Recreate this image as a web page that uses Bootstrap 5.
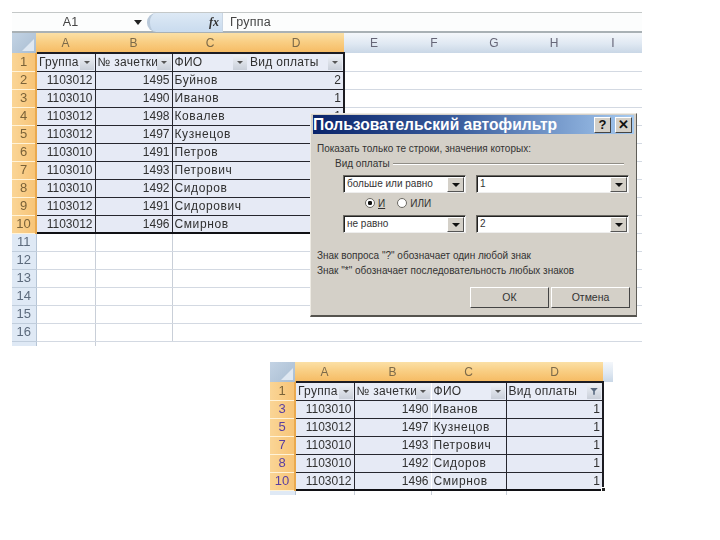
<!DOCTYPE html>
<html lang="ru">
<head>
<meta charset="utf-8">
<title>Автофильтр</title>
<link href="https://cdn.jsdelivr.net/npm/bootstrap@5.3.0/dist/css/bootstrap.min.css" rel="stylesheet">
<style>
body{background:#fff;font-family:"Liberation Sans",Arial,sans-serif;font-size:12px;color:#303030;overflow:hidden;width:720px;height:540px}
.stage{width:720px;height:540px;padding-top:12px;filter:blur(.3px)}
.sheet-one{margin-left:12px;width:630px}
.sheet-two{margin-left:270px;width:343px;margin-top:16px}
.fbar{height:21px;border-top:1px solid #c4c8c8;border-bottom:2px solid #a9b1b5;background:#fcfdfd;line-height:19px;font-size:12.5px}
.fname{width:117px;text-align:center;color:#444}
.farrow{width:0;height:0;border:4px solid transparent;border-top:5px solid #222;border-bottom:0;margin:0 5px}
.fpill{width:75px;height:19px;border-radius:9px 0 0 9px;background:linear-gradient(#dde9f5,#c9dbee);border-left:3px solid #b9c9da;color:#333;text-align:right;padding-right:3px;font:italic bold 12px "Liberation Serif",serif;line-height:19px}
.ftext{padding-left:7px;border-left:1px solid #c9d6e4;letter-spacing:.2px;color:#444}
.xl{table-layout:fixed;border-collapse:collapse;width:100%}
.xl td,.xl th{height:18px;padding:0 2px;line-height:16px;white-space:nowrap;overflow:hidden;font-weight:400;border:0}
.xl .hdr th{height:20px;text-align:center;background:linear-gradient(#fbe0a6,#f9cf85 45%,#f6bc65);color:#7c6a4a}
.xl .hdr th.idle{background:linear-gradient(#f4f7fb,#dfe8f2 55%,#c9d7e6);color:#667}
.xl .hdr th.corner{background:linear-gradient(135deg,#c3d3e4,#a9bdd2);position:relative}
.xl .hdr th.corner::after{content:"";position:absolute;right:2px;bottom:2px;border:6px solid transparent;border-right-color:#dfe8f2;border-bottom-color:#dfe8f2}
.xl th.rn{text-align:center;font-size:13px;background:linear-gradient(90deg,#fad596,#f7c477);color:#7a6238;border-right:2px solid #e9a94f;border-bottom:1px solid #fff3d8}
.xl th.rn.plain{background:#dfe9f5;color:#5c6a7c;border-right:1px solid #b6c5d6;border-bottom:1px solid #c0cddc}
.xl th.rn.vio{color:#5a3fa0}
.xl td.band{background:#e6eaf5;border-bottom:1px solid #26262e}
.xl td.namec{letter-spacing:.6px}
.xl td.headc{background:#e8ecf6;border-top:2px solid #1c1c22;border-bottom:1px solid #26262e}
.xl td.vl{border-left:1px solid #26262e}
.xl td.vw{border-left:1px solid #fff}
.xl td.endc{border-right:2px solid #1c1c22}
.xl td.startc{border-left:2px solid #1c1c22}
.xl tr.lastband td.band{border-bottom:2px solid #101014}
.xl td.gridc{border-bottom:1px solid #d3d9e2}
.xl td.gv{border-left:1px solid #c9cfd8}
.fcell{display:flex;align-items:center;justify-content:space-between;letter-spacing:.3px;height:16px}
.fcell span:first-child{overflow:hidden}
.fbtn{flex:none;width:14px;height:15px;background:linear-gradient(#eef1f6,#c9cfd9);display:flex;align-items:center;justify-content:center;margin-right:-1px}
.fbtn::before{content:"";border:3px solid transparent;border-top:3px solid #555;border-bottom:0}
.fbtn.funnel::before{border:0;width:8px;height:7px;background:#596a80;clip-path:polygon(0 0,100% 0,60% 50%,60% 100%,40% 100%,40% 50%)}
.xl .tailrow th,.xl .tailrow td{height:5px;line-height:0;font-size:0}
.xl .tailrow th.rn{border-bottom:0}
.hook{position:relative}
.grip{position:absolute;left:331px;top:125px;width:5px;height:5px;background:#222;border:1px solid #fff}
.dlg{position:absolute;left:310px;top:113px;width:327px;height:204px;background:#d4d0c8;border:1px solid #eeebe4;border-right-color:#5f5d58;border-bottom:2px solid #55534e;padding:1px 2px;font-size:10px;color:#333;line-height:12px}
.dtitle{height:19px;background:linear-gradient(90deg,#0a246a,#3a5d9d 45%,#a6caf0);color:#fff;font-weight:700;font-size:15.6px;line-height:19px}
.dclose{width:17px;height:16px;background:#d4d0c8;border:1px solid;border-color:#fff #444 #444 #fff;color:#111;font-weight:700;font-size:13px;line-height:14px;text-align:center;margin-right:2px}
.dclose.ask{margin-right:0}
.dbody{padding:9px 4px 0 4px}
.dlegend{margin:2px 6px 0 18px;height:14px}
.dlegend i{flex:1;height:2px;margin-left:3px;border-top:1px solid #908d86;border-bottom:1px solid #fff}
.drow{margin-left:26px;margin-right:1px;gap:10px;height:18px}
.dsel{background:#fff;border:1px solid;border-color:#6b6963 #eee #eee #6b6963;box-shadow:inset 1px 1px 0 #222;height:18px;line-height:16px;padding-left:3px;position:relative;overflow:hidden}
.dsel.one{width:123px}
.dsel.two{flex:1}
.dsel b{position:absolute;right:1px;top:1px;width:17px;height:15px;background:#d4d0c8;border:1px solid;border-color:#fff #555 #555 #fff;display:flex;align-items:center;justify-content:center}
.dsel b::before{content:"";border:4px solid transparent;border-top:4px solid #111;border-bottom:0}
.dradio{height:22px;padding-left:48px;gap:12px}
.dot{width:10px;height:10px;border-radius:50%;background:#fff;border:1px solid #6b6963;display:inline-block;margin-right:3px;vertical-align:-1px}
.dot.on{background:radial-gradient(circle,#111 35%,#fff 42%)}
.dnote{margin-top:15px;line-height:15px;height:30px}
.dbtns{margin-top:9px;gap:2px}
.dbtn{width:79px;height:21px;background:#d4d0c8;border:1px solid;border-color:#fff #444 #444 #fff;text-align:center;line-height:19px;font-size:10.5px}
</style>
</head>
<body>
<div class="stage position-relative">
  <section class="sheet-one">
    <div class="fbar d-flex align-items-center">
      <div class="fname">A1</div>
      <div class="farrow"></div>
      <div class="fpill">fx</div>
      <div class="ftext flex-grow-1">Группа</div>
    </div>
    <table class="xl">
      <colgroup><col style="width:24px"><col style="width:59px"><col style="width:77px"><col style="width:76px"><col style="width:96px"><col style="width:60px"><col style="width:60px"><col style="width:60px"><col style="width:60px"><col style="width:58px"></colgroup>
      <tr class="hdr"><th class="corner"></th><th>A</th><th>B</th><th>C</th><th>D</th><th class="idle">E</th><th class="idle">F</th><th class="idle">G</th><th class="idle">H</th><th class="idle">I</th></tr>
      <tr><th class="rn">1</th><td class="headc startc"><div class="fcell"><span>Группа</span><i class="fbtn"></i></div></td><td class="headc vl"><div class="fcell"><span>№ зачетки</span><i class="fbtn"></i></div></td><td class="headc vl"><div class="fcell"><span>ФИО</span><i class="fbtn"></i></div></td><td class="headc endc"><div class="fcell"><span>Вид оплаты</span><i class="fbtn"></i></div></td><td class="gridc" colspan="5"></td></tr>
      <tr><th class="rn">2</th><td class="band startc text-end">1103012</td><td class="band vl text-end">1495</td><td class="band vl namec">Буйнов</td><td class="band endc text-end">2</td><td class="gridc" colspan="5"></td></tr>
      <tr><th class="rn">3</th><td class="band startc text-end">1103010</td><td class="band vl text-end">1490</td><td class="band vl namec">Иванов</td><td class="band endc text-end">1</td><td class="gridc" colspan="5"></td></tr>
      <tr><th class="rn">4</th><td class="band startc text-end">1103012</td><td class="band vl text-end">1498</td><td class="band vl namec">Ковалев</td><td class="band endc text-end">1</td><td class="gridc" colspan="5"></td></tr>
      <tr><th class="rn">5</th><td class="band startc text-end">1103012</td><td class="band vl text-end">1497</td><td class="band vl namec">Кузнецов</td><td class="band endc text-end">1</td><td class="gridc" colspan="5"></td></tr>
      <tr><th class="rn">6</th><td class="band startc text-end">1103010</td><td class="band vl text-end">1491</td><td class="band vl namec">Петров</td><td class="band endc text-end">2</td><td class="gridc" colspan="5"></td></tr>
      <tr><th class="rn">7</th><td class="band startc text-end">1103010</td><td class="band vl text-end">1493</td><td class="band vl namec">Петрович</td><td class="band endc text-end">1</td><td class="gridc" colspan="5"></td></tr>
      <tr><th class="rn">8</th><td class="band startc text-end">1103010</td><td class="band vl text-end">1492</td><td class="band vl namec">Сидоров</td><td class="band endc text-end">1</td><td class="gridc" colspan="5"></td></tr>
      <tr><th class="rn">9</th><td class="band startc text-end">1103012</td><td class="band vl text-end">1491</td><td class="band vl namec">Сидорович</td><td class="band endc text-end">2</td><td class="gridc" colspan="5"></td></tr>
      <tr class="lastband"><th class="rn">10</th><td class="band startc text-end">1103012</td><td class="band vl text-end">1496</td><td class="band vl namec">Смирнов</td><td class="band endc text-end">1</td><td class="gridc" colspan="5"></td></tr>
      <tr><th class="rn plain">11</th><td class="gridc"></td><td class="gridc gv"></td><td class="gridc gv" colspan="7"></td></tr>
      <tr><th class="rn plain">12</th><td class="gridc"></td><td class="gridc gv"></td><td class="gridc gv" colspan="7"></td></tr>
      <tr><th class="rn plain">13</th><td class="gridc"></td><td class="gridc gv"></td><td class="gridc gv" colspan="7"></td></tr>
      <tr><th class="rn plain">14</th><td class="gridc"></td><td class="gridc gv"></td><td class="gridc gv" colspan="7"></td></tr>
      <tr><th class="rn plain">15</th><td class="gridc"></td><td class="gridc gv"></td><td class="gridc gv" colspan="7"></td></tr>
      <tr><th class="rn plain">16</th><td class="gridc"></td><td class="gridc gv"></td><td class="gridc gv" colspan="7"></td></tr>
      <tr class="tailrow"><th class="rn plain"></th><td></td><td class="gv"></td><td colspan="7"></td></tr>
    </table>
  </section>

  <div class="dlg">
    <div class="dtitle d-flex align-items-center justify-content-between">
      <span>Пользовательский автофильтр</span>
      <span class="d-flex gap-1"><span class="dclose ask">?</span><span class="dclose">✕</span></span>
    </div>
    <div class="dbody">
      <div>Показать только те строки, значения которых:</div>
      <div class="dlegend d-flex align-items-center"><span>Вид оплаты</span><i></i></div>
      <div class="drow d-flex mt-1"><div class="dsel one">больше или равно<b></b></div><div class="dsel two">1<b></b></div></div>
      <div class="dradio d-flex align-items-center"><span><i class="dot on"></i><u>И</u></span><span><i class="dot"></i>ИЛИ</span></div>
      <div class="drow d-flex"><div class="dsel one">не равно<b></b></div><div class="dsel two">2<b></b></div></div>
      <div class="dnote">Знак вопроса "?" обозначает один любой знак<br>Знак "*" обозначает последовательность любых знаков</div>
      <div class="dbtns d-flex justify-content-end"><div class="dbtn">ОК</div><div class="dbtn">Отмена</div></div>
    </div>
  </div>

  <section class="sheet-two hook">
    <table class="xl">
      <colgroup><col style="width:25px"><col style="width:59px"><col style="width:77px"><col style="width:75px"><col style="width:97px"><col style="width:10px"></colgroup>
      <tr class="hdr"><th class="corner"></th><th>A</th><th>B</th><th>C</th><th>D</th><th class="idle"></th></tr>
      <tr><th class="rn">1</th><td class="headc startc"><div class="fcell"><span>Группа</span><i class="fbtn"></i></div></td><td class="headc vl"><div class="fcell"><span>№ зачетки</span><i class="fbtn"></i></div></td><td class="headc vw"><div class="fcell"><span>ФИО</span><i class="fbtn"></i></div></td><td class="headc vl endc"><div class="fcell"><span>Вид оплаты</span><i class="fbtn funnel"></i></div></td><td></td></tr>
      <tr><th class="rn vio">3</th><td class="band startc text-end">1103010</td><td class="band vl text-end">1490</td><td class="band vw namec">Иванов</td><td class="band vl endc text-end">1</td><td></td></tr>
      <tr><th class="rn vio">5</th><td class="band startc text-end">1103012</td><td class="band vl text-end">1497</td><td class="band vw namec">Кузнецов</td><td class="band vl endc text-end">1</td><td></td></tr>
      <tr><th class="rn vio">7</th><td class="band startc text-end">1103010</td><td class="band vl text-end">1493</td><td class="band vw namec">Петрович</td><td class="band vl endc text-end">1</td><td></td></tr>
      <tr><th class="rn vio">8</th><td class="band startc text-end">1103010</td><td class="band vl text-end">1492</td><td class="band vw namec">Сидоров</td><td class="band vl endc text-end">1</td><td></td></tr>
      <tr class="lastband"><th class="rn vio">10</th><td class="band startc text-end">1103012</td><td class="band vl text-end">1496</td><td class="band vw namec">Смирнов</td><td class="band vl endc text-end">1</td><td></td></tr>
      <tr class="tailrow"><th class="rn plain"></th><td></td><td class="gv"></td><td class="gv"></td><td class="gv"></td><td></td></tr>
    </table>
    <i class="grip"></i>
  </section>
</div>
<script src="https://cdn.jsdelivr.net/npm/bootstrap@5.3.0/dist/js/bootstrap.bundle.min.js"></script>
</body>
</html>
